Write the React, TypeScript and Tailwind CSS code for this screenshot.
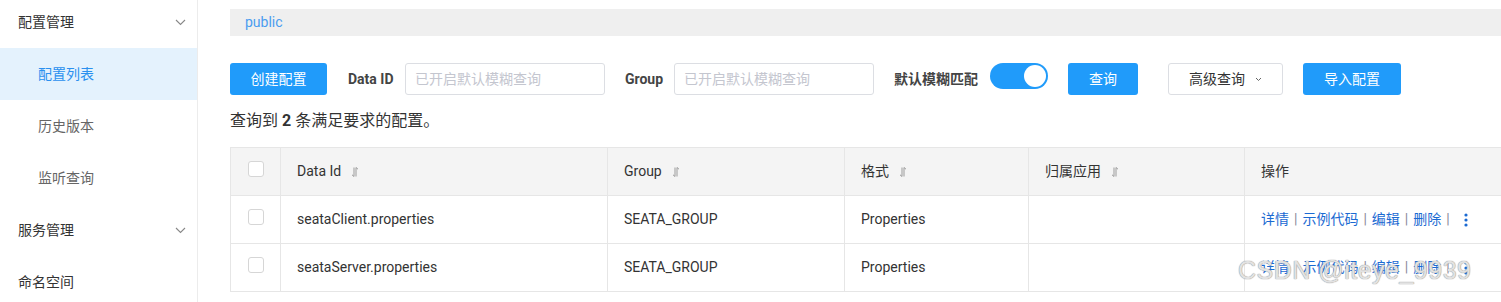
import React from "react";

const CJK = '"Roboto", "Noto Sans CJK SC", "Noto Sans", sans-serif';

function Chevron() {
  return (
    <svg width="11" height="7" viewBox="0 0 11 7" fill="none">
      <path d="M1 1 L5.5 5.5 L10 1" stroke="#888" strokeWidth="1.1" />
    </svg>
  );
}

function SortIcon() {
  return (
    <svg width="8" height="10" viewBox="0 0 8 10" fill="none" className="ml-[10px]">
      <path d="M3 0.5 V9.5 M3 9.5 L1 7.8" stroke="#9a9a9a" strokeWidth="1" />
      <path d="M5 0.5 V9.5 M5 0.5 L7 2.2" stroke="#9a9a9a" strokeWidth="1" />
    </svg>
  );
}

function Checkbox() {
  return <div className="w-[16px] h-[16px] rounded-[3px] border border-[#d6d6d6] bg-white mb-[6px]" />;
}

function Dots() {
  return (
    <svg width="4" height="16" viewBox="0 0 4 16" className="ml-[9px]">
      <circle cx="2" cy="3" r="1.6" fill="#1b6ad2" />
      <circle cx="2" cy="8" r="1.6" fill="#1b6ad2" />
      <circle cx="2" cy="13" r="1.6" fill="#1b6ad2" />
    </svg>
  );
}

function Ops() {
  const sep = <span className="mx-[5px] text-[#8a8a9a]">|</span>;
  return (
    <div className="flex items-center text-[14px] text-[#1b6ad2]">
      <span>详情</span>
      {sep}
      <span>示例代码</span>
      {sep}
      <span>编辑</span>
      {sep}
      <span>删除</span>
      {sep}
      <Dots />
    </div>
  );
}

const cols = ["w-[50px]", "w-[327px]", "w-[237px]", "w-[184px]", "w-[216px]", "w-[300px]"];

export default function App() {
  const rows = [
    { id: "seataClient.properties", group: "SEATA_GROUP", fmt: "Properties" },
    { id: "seataServer.properties", group: "SEATA_GROUP", fmt: "Properties" },
  ];
  return (
    <div className="relative flex w-[1501px] h-[302px] overflow-hidden bg-white text-[#333]" style={{ fontFamily: CJK }}>
      {/* Sidebar */}
      <div className="w-[198px] shrink-0 border-r border-[#ececec]">
        <div className="-mt-[4px]">
          <div className="h-[52px] flex items-center justify-between pl-[18px] pr-[11px] text-[14px] text-[#333]">
            <span>配置管理</span>
            <Chevron />
          </div>
          <div className="h-[52px] flex items-center pl-[38px] text-[14px] text-[#2a90ef] bg-[#e4f2fd]">配置列表</div>
          <div className="h-[52px] flex items-center pl-[38px] text-[14px] text-[#666]">历史版本</div>
          <div className="h-[52px] flex items-center pl-[38px] text-[14px] text-[#666]">监听查询</div>
          <div className="h-[52px] flex items-center justify-between pl-[18px] pr-[11px] text-[14px] text-[#333]">
            <span>服务管理</span>
            <Chevron />
          </div>
          <div className="h-[52px] flex items-center pl-[18px] text-[14px] text-[#333]">命名空间</div>
        </div>
      </div>

      {/* Main */}
      <div className="flex-1 min-w-0 pl-[32px] pt-[9px] overflow-hidden">
        <div className="h-[27px] bg-[#efefef] pl-[15px] flex items-center text-[14px] text-[#4a9df0]">public</div>

        <div className="mt-[27px] h-[32px] flex items-center text-[14px]">
          <div className="w-[97px] h-[32px] rounded-[3px] bg-[#209bfa] text-white flex items-center justify-center shrink-0">创建配置</div>
          <span className="ml-[21px] w-[57px] font-bold text-[#444] shrink-0">Data ID</span>
          <div className="w-[200px] h-[32px] border border-[#dcdee3] rounded-[3px] flex items-center pl-[9px] text-[#c4c6cf] shrink-0">已开启默认模糊查询</div>
          <span className="ml-[20px] w-[49px] font-bold text-[#444] shrink-0">Group</span>
          <div className="w-[200px] h-[32px] border border-[#dcdee3] rounded-[3px] flex items-center pl-[9px] text-[#c4c6cf] shrink-0">已开启默认模糊查询</div>
          <span className="ml-[20px] w-[96px] font-bold text-[#444] shrink-0">默认模糊匹配</span>
          <div className="w-[58px] h-[26px] rounded-full bg-[#209bfa] relative shrink-0 -mt-[6px]">
            <div className="absolute right-[2px] top-[2px] w-[22px] h-[22px] rounded-full bg-white" />
          </div>
          <div className="ml-[20px] w-[70px] h-[32px] rounded-[3px] bg-[#209bfa] text-white flex items-center justify-center shrink-0">查询</div>
          <div className="ml-[30px] w-[115px] h-[32px] rounded-[3px] border border-[#dcdee3] bg-white text-[#333] flex items-center justify-center gap-[10px] shrink-0">
            <span>高级查询</span>
            <svg width="7" height="5" viewBox="0 0 7 5" fill="none">
              <path d="M1 1 L3.5 3.5 L6 1" stroke="#666" strokeWidth="1" />
            </svg>
          </div>
          <div className="ml-[20px] w-[98px] h-[32px] rounded-[3px] bg-[#209bfa] text-white flex items-center justify-center shrink-0">导入配置</div>
        </div>

        <div className="h-[52px] flex items-center text-[16px] text-[#333]">
          查询到&nbsp;<b className="font-bold">2</b>&nbsp;条满足要求的配置。
        </div>

        <table className="border-collapse text-[14px] text-[#333] table-fixed w-[1314px]">
          <thead>
            <tr className="h-[48px] bg-[#f4f4f4]">
              <th className={`${cols[0]} border border-[#e6e6e6] font-normal`}>
                <div className="flex justify-center items-center"><Checkbox /></div>
              </th>
              <th className={`${cols[1]} border border-[#e6e6e6] font-normal text-left pl-[16px]`}>
                <div className="flex items-center">Data Id<SortIcon /></div>
              </th>
              <th className={`${cols[2]} border border-[#e6e6e6] font-normal text-left pl-[16px]`}>
                <div className="flex items-center">Group<SortIcon /></div>
              </th>
              <th className={`${cols[3]} border border-[#e6e6e6] font-normal text-left pl-[16px]`}>
                <div className="flex items-center">格式<SortIcon /></div>
              </th>
              <th className={`${cols[4]} border border-[#e6e6e6] font-normal text-left pl-[16px]`}>
                <div className="flex items-center">归属应用<SortIcon /></div>
              </th>
              <th className={`${cols[5]} border border-[#e6e6e6] border-r-0 font-normal text-left pl-[16px]`}>操作</th>
            </tr>
          </thead>
          <tbody>
            {rows.map((r) => (
              <tr key={r.id} className="h-[48px]">
                <td className="border border-[#e6e6e6]">
                  <div className="flex justify-center items-center"><Checkbox /></div>
                </td>
                <td className="border border-[#e6e6e6] pl-[16px]">{r.id}</td>
                <td className="border border-[#e6e6e6] pl-[16px]">{r.group}</td>
                <td className="border border-[#e6e6e6] pl-[16px]">{r.fmt}</td>
                <td className="border border-[#e6e6e6] pl-[16px]"></td>
                <td className="border border-[#e6e6e6] border-r-0 pl-[16px]"><Ops /></td>
              </tr>
            ))}
          </tbody>
        </table>
      </div>

      {/* watermark */}
      <div
        className="absolute left-[1238px] top-[252px] text-[25px] text-[#e2e2e2] tracking-[0.5px] pointer-events-none whitespace-nowrap"
        style={{ fontFamily: '"Liberation Sans", Arial, sans-serif', textShadow: "0 0 1px #999, 0 0 1px #999" }}
      >
        CSDN @iteye_9939
      </div>
    </div>
  );
}
